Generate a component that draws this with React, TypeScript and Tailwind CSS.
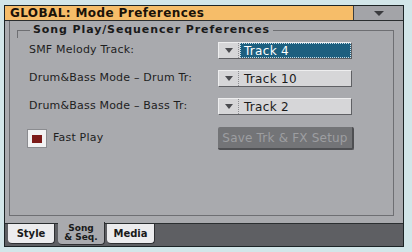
import React from "react";

const font = "font-['DejaVu_Sans',sans-serif]";

const Dropdown = ({ value, selected = false }: { value: string; selected?: boolean }) => (
  <div className="flex h-[17px] w-[134px] border-t border-l border-t-[#eeeeef] border-l-[#eeeeef] border-b border-r border-b-[#5f6064] border-r-[#5f6064] bg-[#d6d6d8]">
    <div className="flex w-[20px] items-center justify-center border-r border-dotted border-[#8d8e92]">
      <svg width="8" height="5" viewBox="0 0 8 5">
        <path d="M0 0h8L4 5z" fill="#4a4b4f" />
      </svg>
    </div>
    <div
      className={
        selected
          ? "ml-[1px] flex flex-1 items-center border border-dotted border-[#c9dde6] bg-[#1d5f7f] pl-[3px] text-[12px] tracking-[0.3px] text-white"
          : "flex flex-1 items-center pl-[5px] text-[12px] tracking-[0.3px] text-[#1b1b1b]"
      }
    >
      {value}
    </div>
  </div>
);

const Row = ({ label, value, selected }: { label: string; value: string; selected?: boolean }) => (
  <div className="grid grid-cols-[189px_134px] items-center">
    <span className="text-[11px] tracking-[0.2px] text-[#1e1e1e]">{label}</span>
    <Dropdown value={value} selected={selected} />
  </div>
);

export default function App() {
  return (
    <div className={`h-[252px] w-[412px] bg-[#d2e6e9] pl-[4px] pt-[5px] ${font}`}>
      <div className="flex h-[242px] w-[400px] flex-col border border-[#1c2426] bg-[#a9aaae]">
        {/* header */}
        <div className="flex h-[15px] border-b border-[#2a2e30]">
          <div className="flex flex-1 items-center bg-[#f6bd69] pl-[5px] text-[12px] font-bold tracking-[0.4px] text-[#1a1208]">
            GLOBAL: Mode Preferences
          </div>
          <div className="flex w-[50px] items-center justify-center border-l border-[#3a3e40] bg-[#a3a4a8]">
            <svg width="10" height="5" viewBox="0 0 10 5">
              <path d="M0 0h10L5 5z" fill="#3a3b3e" />
            </svg>
          </div>
        </div>

        {/* body */}
        <div className="flex-1 pb-[7px] pl-[4px] pr-[9px]">
          <div className="h-full border-b border-l border-[#6e6f73] pt-[9px]">
            <div className="ml-[7px] h-full border-r border-t border-[#6e6f73]">
              <div className="h-[7px] w-0 border-l border-[#6e6f73]" />
              <div className="-mt-[14px] flex h-[13px] items-center pl-[13px]">
                <span className="bg-[#a9aaae] px-[3px] text-[11px] font-bold tracking-[0.9px] text-[#1a1a1a]">
                  Song Play/Sequencer Preferences
                </span>
              </div>
              <div className="mt-[5px] flex flex-col gap-[11px] pl-[12px]">
                <Row label="SMF Melody Track:" value="Track 4" selected />
                <Row label="Drum&Bass Mode – Drum Tr:" value="Track 10" />
                <Row label="Drum&Bass Mode – Bass Tr:" value="Track 2" />
              </div>
              <div className="mt-[12px] grid grid-cols-[189px_136px] items-center pl-[12px]">
                <div className="-ml-[2px] flex items-center gap-[6px]">
                  <div className="flex h-[19px] w-[20px] items-center justify-center border border-[#8b8c90] bg-[#f2f2f3]">
                    <div className="h-[8px] w-[10px] bg-[#7c1a18]" />
                  </div>
                  <span className="text-[11px] tracking-[0.2px] text-[#1e1e1e]">Fast Play</span>
                </div>
                <div className="flex h-[23px] items-center justify-center rounded-[2px] border-b-2 border-r-2 border-[#4e4f52] bg-[#737477] text-[12px] tracking-[0.2px] text-[#9d9ea1]">
                  Save Trk &amp; FX Setup
                </div>
              </div>
            </div>
          </div>
        </div>

        {/* tabs */}
        <div className="flex h-[23px] items-start gap-[2px] border-t border-[#2a2e30] bg-[#5e5f63] pl-[3px]">
          <div className="flex h-[20px] w-[47px] items-center justify-center rounded-b-[4px] border-b border-r border-[#2e2f32] bg-[#ececee] text-[10px] font-bold text-[#1a1a1a]">
            Style
          </div>
          <div className="-mt-[2px] ml-[1px] flex h-[23px] w-[47px] flex-col items-center justify-center rounded-b-[4px] border-b border-r border-[#2e2f32] bg-[#a9aaae] text-[9px] font-bold leading-[9px] text-[#1a1a1a]">
            <span>Song</span>
            <span>&amp; Seq.</span>
          </div>
          <div className="flex h-[20px] w-[48px] items-center justify-center rounded-b-[4px] border-b border-r border-[#2e2f32] bg-[#ececee] text-[10px] font-bold text-[#1a1a1a]">
            Media
          </div>
        </div>
      </div>
    </div>
  );
}
